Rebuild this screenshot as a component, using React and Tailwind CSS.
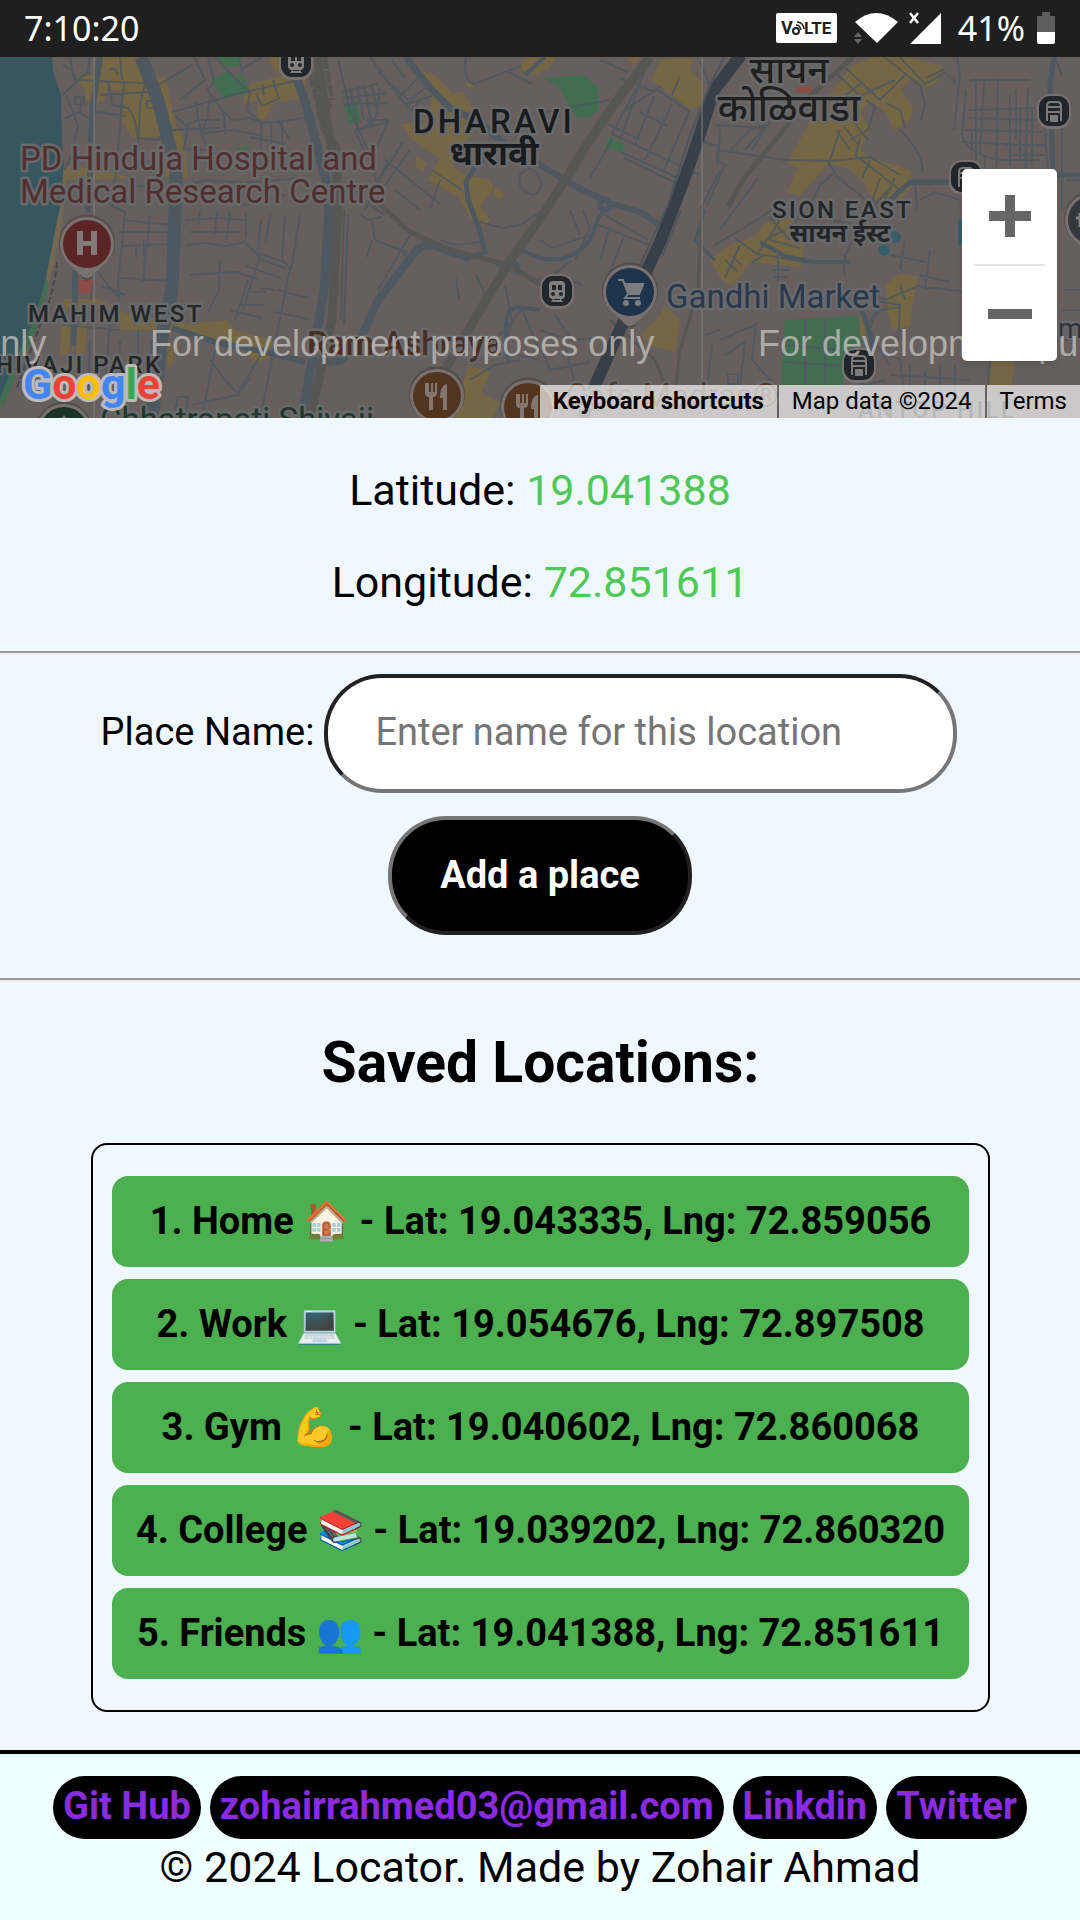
import React from "react";

const MAP_FONT = "Roboto, 'Noto Sans', 'Noto Sans Devanagari', sans-serif";

const locations = [
  { name: "Home 🏠", lat: "19.043335", lng: "72.859056" },
  { name: "Work 💻", lat: "19.054676", lng: "72.897508" },
  { name: "Gym 💪", lat: "19.040602", lng: "72.860068" },
  { name: "College 📚", lat: "19.039202", lng: "72.860320" },
  { name: "Friends 👥", lat: "19.041388", lng: "72.851611" },
];

const links = [
  { label: "Git Hub", href: "#github" },
  { label: "zohairrahmed03@gmail.com", href: "mailto:zohairrahmed03@gmail.com" },
  { label: "Linkdin", href: "#linkdin" },
  { label: "Twitter", href: "#twitter" },
];

const watermarks = [-458, 150, 758];

function StatusBar() {
  return (
    <header className="flex h-[57px] items-center justify-between bg-[#1f1f1f] pr-[25px] pb-px pl-6 font-['Noto_Sans',sans-serif] text-[34px] leading-none text-white">
      <span>7:10:20</span>
      <div className="flex items-center">
        <svg className="h-[30px] w-[61px]" viewBox="0 0 61 30" aria-label="VoLTE">
          <rect width="61" height="30" rx="2" fill="#fff" />
          <text x="5" y="21" fontFamily="Roboto, sans-serif" fontWeight="700" fontSize="18" fill="#1f1f1f">V</text>
          <text x="28" y="21" fontFamily="Roboto, sans-serif" fontWeight="700" fontSize="17" fill="#1f1f1f">LTE</text>
          <circle cx="20" cy="18" r="3" fill="none" stroke="#1f1f1f" strokeWidth="2" />
          <path d="M20 12q4 0 5 5M21 9q6 0 7 7" fill="none" stroke="#1f1f1f" strokeWidth="1.500" />
        </svg>
        <svg className="ml-4 h-8 w-[46px]" viewBox="0 0 46 32">
          <path d="M2 10Q23-8 45 10L24 31Z" fill="#fff" />
          <path d="M1 25l4-5 4 5ZM1 27l4 5 4-5Z" fill="#666" />
        </svg>
        <svg className="ml-2 h-8 w-[35px]" viewBox="0 0 35 32">
          <path d="M3 32L34 1V32Z" fill="#fff" />
          <path d="M3 1l8 10M11 1L3 11" stroke="#fff" strokeWidth="2.500" />
        </svg>
        <span className="ml-4">41%</span>
        <svg className="ml-3 h-8 w-[18px]" viewBox="0 0 18 32">
          <path d="M0 5q0-1 1-1H5V0h8V4h4q1 0 1 1V20H0Z" fill="#5e5e5e" />
          <path d="M0 20H18V30q0 2-2 2H2q-2 0-2-2Z" fill="#fff" />
        </svg>
      </div>
    </header>
  );
}

function Pin({ x, y, fill, children }) {
  return (
    <g transform={`translate(${x} ${y})`}>
      <path d="M0 37Q-5 36-8 28L-18 20A28 28 0 1 1 18 20L8 28Q5 36 0 37Z" fill="#3f3b3b" opacity=".5" />
      <path d="M0 34Q-4 34-8 29L-18 20A27 27 0 1 1 18 20L8 29Q4 34 0 34Z" fill="#787170" />
      <circle r="24" fill={fill} />
      {children}
    </g>
  );
}

function Fork() {
  return (
    <path
      d="M-12-13v10q0 4 4 4V14h4V1q4 0 4-4V-13h-2v9h-2v-9h-2v9h-2v-9ZM9-12q-6 2-6 14h3V14h4V-12Z"
      fill="#82766f"
    />
  );
}

function Transit({ x, y, bus }) {
  return (
    <g transform={`translate(${x} ${y})`}>
      <rect x="-17" y="-17" width="34" height="35" rx="13" fill="#777170" />
      <rect x="-15" y="-15" width="30" height="30" rx="11" fill="#22262b" />
      {bus ? (
        <g fill="none" stroke="#7d7a7a" strokeWidth="2">
          <path d="M-7 10V-5q0-4 4-4H3q4 0 4 4V10" />
          <path d="M-7-4H7M-7 1H7" />
          <rect x="-3" y="5" width="6" height="5" fill="#7d7a7a" />
        </g>
      ) : (
        <g>
          <path d="M-8-6q0-4 4-4H4q4 0 4 4V4q0 4-4 4L6 11H-6L-4 8q-4 0-4-4Z" fill="#82807f" />
          <path d="M-5-6h4v5h-4ZM1-6h4v5H1ZM-3 9H3V8H-3Z" fill="#22262b" />
          <circle cx="-4" cy="3" r="2" fill="#22262b" />
          <circle cx="4" cy="3" r="2" fill="#22262b" />
        </g>
      )}
    </g>
  );
}

function MapLabel({ children, className = "", ...props }) {
  return (
    <text
      fontFamily={MAP_FONT}
      stroke="#68696a"
      strokeWidth="5"
      strokeLinejoin="round"
      paintOrder="stroke"
      className={className}
      {...props}
    >
      {children}
    </text>
  );
}

function MapDrawing() {
  return (
    <svg className="block h-full w-full" viewBox="0 57 1080 361" preserveAspectRatio="xMidYMid slice" role="img" aria-label="Map of Dharavi, Mumbai">
      <rect y="57" width="1080" height="361" fill="#665f5e" />

      <g fill="#766744">
        <path d="M100 57H148L141 75 152 78 165 77 171 103 176 125 184 140 188 178 160 176 162 136 132 138 122 120 124 93 108 89 103 102 86 100 84 88 76 78 92 75Z" />
        <path d="M268 57H284L290 73 276 72ZM250 84L280 76 306 70 306 98 275 102 265 119 257 119 259 99 243 105 244 95Z" />
        <path d="M64 165L110 172 130 178 60 180ZM63 299L100 299 125 313 192 324 226 320 235 330 272 340 270 358 256 362 240 348 190 336 168 330 122 330 94 308 63 308Z" />
        <path d="M61 323H72L68 355H60ZM78 325H87L84 355H76ZM169 344H177L171 367H167Z" />
        <path d="M416 57L424 72 436 76 452 93 463 92 472 108 464 114 480 124 470 138 460 146 452 165 462 174 490 180 494 188 480 207 490 220 484 226 470 218 458 196 428 180 440 158 410 138 402 124 425 121 432 100Z" />
        <path d="M417 156L427 163 422 171 415 166ZM495 187L505 194 500 200 493 195ZM466 82L474 86 469 90ZM525 57H540V77L520 70Z" />
        <path d="M540 57H557L547 70H540ZM626 57H640L635 66Z" />
        <path d="M660 60L693 57 690 70 704 84 700 106 690 109 652 80Z" />
        <path d="M851 66L874 57H908L943 66 937 82 926 87 912 78 900 90 913 108 909 122 894 130 886 112 871 101 860 112 870 130 860 150 871 158 910 170 912 186 892 210 870 196 866 184 848 168 828 164 800 195 787 192 798 168 787 163 810 122 830 114 829 94 842 80Z" />
        <path d="M781 220L795 216 790 233 804 244 801 267 770 264 751 262 732 286 722 280 710 260 728 246 756 236 765 222Z" />
        <path d="M886 284L900 274 918 276 913 300 910 326 893 330 888 312ZM860 315L868 330 860 342Z" />
        <path d="M665 306L680 320 675 352 652 346 641 334 658 318ZM991 361H1014L1012 385H988Z" />
        <path d="M468 365L490 372 481 394 500 402 492 418H456L460 395Z" />
      </g>

      <g fill="#416e50">
        <path d="M217 57H241L239 65 228 67 220 63ZM211 80L229 71 234 78 241 75 251 92 224 99ZM344 105L356 102 361 121 349 124ZM234 149L251 145 244 152Z" />
        <path d="M543 78L585 75 598 88 599 110 588 118 576 117 566 100 559 87ZM609 137L624 144 622 152 605 147Z" />
        <path d="M785 320L857 316 862 343 850 363 841 387H781Z" />
        <path d="M46 278L49 283 38 325 15 378 2 410 0 398 20 350 35 318ZM53 393H62V401H53Z" />
      </g>

      <path d="M0 57H52L53 72 61 95 62 140 64 165 60 207 46 278 36 315 20 350 0 398Z" fill="#36575f" />
      <path d="M64 165L60 207 46 278 49 284 60 235 66 190Z" fill="#756952" />
      <path d="M57 262Q54 290 46 310T16 390" fill="none" stroke="#45474a" strokeWidth="2" strokeDasharray="6 3" />
      <path d="M78 280H93L91 293H79ZM794 92Q805 79 816 92Z" fill="#8c4c45" />
      <g fill="#345f69">
        <circle cx="884" cy="250" r="6" /><circle cx="895" cy="237" r="6" /><path d="M958 220h6v25h-6Z" />
      </g>

      <g fill="none" stroke="#4e5860" strokeWidth="2" opacity=".85">
        <path d="M63 65L72 70 76 80 98 81 160 84 192 65M70 57L74 80M120 57L122 80M110 70Q115 65 118 75M108 82L112 105 128 108 134 118 138 138 158 140 172 125M124 83L122 100 118 150 112 205M145 84L140 105 138 150M82 96L80 112 65 118M96 112L126 116M75 97h9v7h-9ZM147 101h7v7h-7ZM100 95L150 92" />
        <path d="M172 112L240 93 300 80M180 100L205 80 194 57M208 57L214 82 207 90 222 110 232 120 250 118 262 123 285 121 310 117M215 57L250 94 246 110 262 122M240 70L262 57M238 57L243 73M175 116L186 125 198 120 220 120M188 124L184 150M196 101L198 120 205 143 220 160M210 98L207 118 203 130M223 110L226 134M200 134L230 130 260 135M262 123L260 155M271 122V155M282 121V145M250 137L285 144M210 142L208 165M170 130L220 128M278 120L290 140M256 94L262 106 280 98M273 80L278 97M262 84L264 95M182 148L205 150" />
        <path d="M342 92L378 84M343 98L386 93M344 104L388 103M350 88L358 130M357 86L364 120M364 85L372 125M371 84L378 115M380 88L376 117 361 130M355 130L388 122 376 148M366 120H388M355 130L366 155" />
        <path d="M370 57L400 98 422 122M378 72L408 100M392 60L405 78M400 96L420 76 406 57M410 100L425 88M406 104L432 96M412 110L422 98M466 57Q462 82 475 84L505 72 522 66M508 72L532 84M385 160L440 204M403 142L380 178M432 170L462 190M410 150L385 185M386 165L365 210M440 180L430 208M395 190L420 210M370 205L385 215M520 175q10-12 18 0t-4 20q-18-4-14-20Z" />
        <path d="M90 57L88 72 62 95M66 95L78 125 72 155 64 170M80 112L90 120M120 155L180 168M130 185L175 190 205 180 245 183 300 178M205 190L245 205 285 195M110 205L125 212 122 246 118 280M122 246L170 244M150 215L143 282M122 220L170 225M136 246v12M144 240v16M119 232H170M185 220L218 218 245 220M186 245L205 243 225 246 245 242 262 260 285 268M190 232H240M200 210L198 225M218 210L214 235M230 212L226 240M246 213V238M261 220L258 250M270 214L266 242M190 275L236 272 258 279M120 278L172 281M96 270L120 300M102 286L125 295M118 280L119 300M220 260L219 290 208 312M260 257L243 310M290 268L260 420M285 215L282 260 292 270M300 215L291 270M248 280L235 320M230 310L262 318M255 252L284 262M246 266L281 278M262 288L275 290M250 292H266M240 305H265M278 290L308 298M275 312L308 319M266 345L237 395 192 405M237 395L250 378M215 350L202 417M210 360L232 388 240 395M174 417L178 397H188L186 417M110 320L103 415M120 340L118 395M138 330V380M152 340L146 410M90 340L88 390M94 280L90 300M62 325L120 330" />
        <path d="M338 60L350 110 372 160 380 205M360 214L367 220 382 217M372 220L375 240 408 253M372 240L367 257M410 235L378 290M417 232L424 242M403 254L412 258 382 300M456 278Q458 290 459 300M505 286L512 320 505 350M520 305L535 340 540 352M490 260L505 270 540 280M480 222L502 228 520 225 540 212M476 275L488 300M470 380L495 365 520 360M523 308L505 330 482 348M506 352L540 360M440 240L455 245 480 242" />
        <path d="M622 112L662 86M620 78L655 92M644 72L620 140M628 72L600 60M655 88L690 112M640 82L612 134 700 175M612 140L590 178M608 124L640 140M640 112L668 126M654 96L635 145M672 104L645 160M689 112L664 170M621 152L683 180M624 158L680 185M700 62L716 100M680 76L672 95M545 112L610 100" />
        <path d="M540 240L552 248 590 235M583 210L590 228 575 260M598 225L650 245M610 226L600 260M624 236L610 272M570 210L580 235M572 260L540 285M560 275L582 285M600 212L648 240M540 330L570 340 595 338M555 315L570 338M542 350L550 370 590 362M565 345L575 385" />
        <path d="M716 125L766 128M704 142L718 146 717 160 725 165 707 205M718 150L785 160 832 161 870 157 900 175M745 150L782 108M730 151L750 130 766 125M720 125L718 165M720 170L700 210M758 178L720 230M745 180L728 210M764 130L752 150M835 72L860 96 895 80M860 84L842 98M846 68L880 100 905 75M884 57L920 85 925 105 921 120M900 57L925 84 943 74M866 100L875 107 868 130 850 140M886 103L900 110 905 128M836 130L850 150M844 126L858 145M852 120L868 140M830 160L840 130M860 138L856 154M828 162L835 172 820 185 810 205M835 175L860 195 875 210M855 155L900 190M870 160L862 178M880 178L870 208M895 178L882 205M900 130Q925 155 922 172M926 78L942 70 955 82M957 57L960 75 954 130M915 180L917 210M888 190L875 205M910 184L970 183M920 200L935 192 960 200" />
        <path d="M968 110L1035 108M968 118L1040 120M965 130L1043 132M962 142L1045 146M976 80V160M984 80L980 155M998 78L996 180M1010 95V165M1020 110V160M1032 110V165M970 80H1030M966 90L962 135Q968 155 1000 160H1040M1003 145L1045 145M1010 155H1045M1000 170H1042M985 155V170M972 132V150M1043 95L1048 175M1016 90V140M1028 88L1025 180M1062 110V210M1066 180H1080M1055 57L1062 75M955 85V80" />
        <path d="M715 245L760 218 772 210M735 238L757 254 805 262M757 254L768 238 785 230M770 240L800 248M778 255V282M773 270H790M774 277H788M785 210L768 240M800 212L790 235M725 260L738 272M732 256L742 266M740 245L725 278M765 255L752 262M770 218L790 240M845 275Q842 260 848 250 856 235 860 213M832 220L855 225M860 290L885 300 918 286 1000 296M872 300L900 305 898 345M900 285L905 300M880 290L870 330M755 325L720 340M756 322L752 360 770 380M725 355L745 342 740 385M728 374h10v10h-10ZM712 344L708 380M705 335L720 330M785 345L840 350M786 362L845 366M825 320V385M805 320V385M866 325L880 310 900 307M880 350L900 360 905 400M890 375L970 380M910 365V390M925 370V390M940 365V395M955 365V400M870 335L890 365M865 385L885 380M985 240L1000 300M920 275L950 282M930 250L925 290M890 255L925 262M905 240L900 270M1064 290H1080M1062 310H1080M1061 340H1080M990 360L988 385" />
      </g>

      <g fill="none" stroke="#4d5861">
        <path d="M100 57L93 105 91 140Q90 190 88 212M75 270V300L73 345" strokeWidth="6" />
        <path d="M141 57L158 100 168 140 176 172 175 210 172 290 163 330 152 418" strokeWidth="13" />
        <path d="M172 328L215 342 266 352 305 362" strokeWidth="6" />
        <path d="M296 75L306 105 318 150 326 180 329 210 324 290 312 360 302 418" strokeWidth="9" />
        <path d="M348 215L344 325" strokeWidth="2" />
        <path d="M316 364L342 360 360 340 378 300 415 252Q428 240 445 250L470 258" strokeWidth="8" />
        <path d="M470 258L485 252 478 225 468 200 466 182 476 165 500 150" strokeWidth="5" />
        <path d="M406 57L430 88 450 108 478 122 500 140 540 165" strokeWidth="7" />
        <path d="M525 75L545 57M509 362Q503 330 508 314 510 306 525 308L540 310M520 250L540 258M508 256L520 268" strokeWidth="4" />
        <path d="M540 165L575 186 610 203 640 212 660 225M604 200a5 5 0 1 0 2 0" strokeWidth="6" />
        <path d="M540 258Q570 265 590 240L600 214" strokeWidth="4" />
        <path d="M760 242L785 256 812 262 850 262" strokeWidth="4" />
        <path d="M1054 57L1050 85 1054 200M1050 175H1080M965 182H910L885 205M862 310L872 340 862 385" strokeWidth="5" />
        <path d="M705 210L695 240 715 260" strokeWidth="3" />
      </g>

      <g fill="none" stroke="#565655">
        <path d="M307 60L330 105 322 130M310 75L325 135M315 80L320 120M325 57L332 100" strokeWidth="4" strokeDasharray="12 2" />
        <path d="M318 57L324 100 330 140 337 175 338 210 332 320 310 418" strokeWidth="9" />
        <path d="M330 135L342 153" strokeWidth="4" />
        <path d="M650 57L620 96 588 143 545 212 512 258 480 310 446 368" strokeWidth="9" />
        <path d="M853 57L810 96 781 133 745 177 728 206M375 200L410 232 450 250 510 265 540 285" strokeWidth="5" />
        <path d="M702 205L698 290 680 350 676 385M610 320L655 360 665 385" strokeWidth="3" />
        <path d="M344 210L341 320" strokeWidth="2" />
      </g>
      <path d="M741 55L714 90 698 140 684 180 661 240 634 298 596 383 583 418" fill="none" stroke="#374049" strokeWidth="12" />
      <path d="M724 57L708 90 690 135 668 205 640 265M681 210L663 255" fill="none" stroke="#4b555e" strokeWidth="2" />

      <path d="M94 57V418M702 57V418" stroke="#85807f" strokeWidth="1" />

      <Transit x={296} y={62} />
      <Transit x={557} y={291} />
      <Transit x={1054} y={111} bus />
      <Transit x={966} y={177} bus />
      <Transit x={859} y={365} bus />

      <MapLabel x="413" y="133" fontSize="33" fontWeight="500" fill="#191b1d" className="tracking-widest">DHARAVI</MapLabel>
      <MapLabel x="494" y="165" fontSize="34" fontWeight="700" textAnchor="middle" fill="#191b1d">धारावी</MapLabel>
      <MapLabel x="789" y="83" fontSize="37" fontWeight="500" textAnchor="middle" fill="#202020">सायन</MapLabel>
      <MapLabel x="789" y="121" fontSize="38" fontWeight="500" textAnchor="middle" fill="#202020">कोळिवाडा</MapLabel>
      <MapLabel x="772" y="218" fontSize="24" fontWeight="500" fill="#232527" className="tracking-widest">SION EAST</MapLabel>
      <MapLabel x="840" y="242" fontSize="25" fontWeight="700" textAnchor="middle" fill="#232527">सायन ईस्ट</MapLabel>
      <MapLabel x="20" y="170" fontSize="33" fill="#512e2f">PD Hinduja Hospital and</MapLabel>
      <MapLabel x="20" y="203" fontSize="33" fill="#512e2f">Medical Research Centre</MapLabel>
      <MapLabel x="28" y="322" fontSize="24" fontWeight="500" fill="#242628" className="tracking-widest">MAHIM WEST</MapLabel>
      <MapLabel x="-21" y="373" fontSize="24" fontWeight="500" fill="#242628" className="tracking-widest">SHIVAJI PARK</MapLabel>
      <MapLabel x="666" y="308" fontSize="33" fill="#28394f">Gandhi Market</MapLabel>
      <MapLabel x="307" y="355" fontSize="33" fontWeight="500" fill="#492f25">Ram Ashraya</MapLabel>
      <MapLabel x="100" y="431" fontSize="33" fill="#21372d">Chhatrapati Shivaji</MapLabel>
      <MapLabel x="566" y="407" fontSize="33" fill="#51362a">Cafe Madras®</MapLabel>
      <MapLabel x="858" y="418" fontSize="24" fontWeight="500" fill="#242628" className="tracking-widest">ANTOP HILL</MapLabel>
      <MapLabel x="1058" y="338" fontSize="28" fill="#30343a">m</MapLabel>

      <Pin x={87} y={244} fill="#5b2528">
        <path d="M-10-13h6V-3H4V-13h6V11H4V2H-4v9h-6Z" fill="#837b7a" />
      </Pin>
      <Pin x={630} y={292} fill="#1d344a">
        <path d="M-12-12h5L-2 2H9L13-7M-6-8H13L9 2H-2L-5 6H10" fill="none" stroke="#7b7d80" strokeWidth="2" />
        <path d="M-6-8H13L9 2H-2Z" fill="#7b7d80" />
        <circle cx="-4" cy="11" r="3" fill="#7b7d80" />
        <circle cx="8" cy="11" r="3" fill="#7b7d80" />
      </Pin>
      <Pin x={437} y={396} fill="#523520"><Fork /></Pin>
      <Pin x={528} y={407} fill="#523520"><Fork /></Pin>
      <Pin x={64} y={431} fill="#193326"><path d="M0-16L9-4H-9Z" fill="#77706f" /></Pin>
      <Pin x={1092} y={220} fill="#34373b"><path d="M-16-2h8M-12-7v14" stroke="#82807f" strokeWidth="3" /></Pin>

      {watermarks.map((x) => (
        <text key={x} x={x} y="356" fontFamily="'Liberation Sans', Arial, sans-serif" fontSize="36" fill="#c4c1bf" fillOpacity=".78">
          For development purposes only
        </text>
      ))}
    </svg>
  );
}

function GoogleLogo() {
  return (
    <svg className="absolute bottom-1 left-5 h-[58px] w-[148px]" viewBox="20 356 148 58" aria-label="Google">
      <text x="23" y="399" fontFamily="Roboto, sans-serif" fontSize="43" fontWeight="700" stroke="#bdbbba" strokeWidth="6" strokeLinejoin="round" paintOrder="stroke">
        <tspan fill="#4285f4">G</tspan>
        <tspan fill="#ea4335">o</tspan>
        <tspan fill="#fbbc05">o</tspan>
        <tspan fill="#4285f4">g</tspan>
        <tspan fill="#34a853">l</tspan>
        <tspan fill="#ea4335">e</tspan>
      </text>
    </svg>
  );
}

function MapView() {
  return (
    <section className="relative h-[361px] overflow-hidden">
      <MapDrawing />
      <GoogleLogo />
      <div className="absolute top-28 right-[23px] flex w-[95px] flex-col items-center rounded-[5px] bg-white shadow-md">
        <button type="button" aria-label="Zoom in" className="flex h-[95px] w-full items-center justify-center">
          <svg className="h-11 w-11" viewBox="0 0 44 44"><path d="M17 0H27V16H43V26H27V42H17V26H1V16H17Z" fill="#666" /></svg>
        </button>
        <div className="h-0.5 w-[71px] bg-[#e6e6e6]" />
        <button type="button" aria-label="Zoom out" className="flex h-[95px] w-full items-center justify-center">
          <svg className="h-11 w-11" viewBox="0 0 44 44"><path d="M0 17H44V27H0Z" fill="#666" /></svg>
        </button>
      </div>
      <div className="absolute right-0 bottom-0 flex h-[33px] gap-[2px] text-[24px] leading-[33px] text-black">
        <button type="button" className="bg-[#f5f5f5]/70 px-[13px] font-bold">Keyboard shortcuts</button>
        <span className="bg-[#f5f5f5]/70 px-[13px]">Map data ©2024</span>
        <a href="#terms" className="bg-[#f5f5f5]/70 px-[13px]">Terms</a>
      </div>
    </section>
  );
}

function Divider() {
  return <hr className="h-1 border-t-2 border-b-2 border-t-[#9a9a9a] border-b-[#ededed]" />;
}

export default function App() {
  return (
    <div className="flex min-h-screen flex-col bg-[#f0f8ff] font-[Roboto,sans-serif] text-black">
      <StatusBar />
      <MapView />
      <main>
        <section className="flex flex-col gap-[42px] pt-[47px] pb-11 text-center text-[43px] leading-[50px]">
          <p>Latitude: <span className="text-[#50c858]">19.041388</span></p>
          <p>Longitude: <span className="text-[#50c858]">72.851611</span></p>
        </section>
        <Divider />
        <form className="flex flex-col items-center gap-[23px] pt-[19px] pb-[43px] text-[38px]" onSubmit={(e) => e.preventDefault()}>
          <div className="flex items-center gap-[10px] pr-[22px]">
            <label htmlFor="place" className="pb-0.5">Place Name:</label>
            <input
              id="place"
              type="text"
              placeholder="Enter name for this location"
              className="h-[119px] w-[633px] rounded-[58px] border-4 border-[#767676] bg-white px-[47px] pb-1 [border-style:inset] placeholder:text-[#757575]"
            />
          </div>
          <button type="submit" className="h-[119px] rounded-[58px] border-4 border-[#767676] bg-black px-12 font-bold text-white [border-style:outset]">
            Add a place
          </button>
        </form>
        <Divider />
        <section className="pt-[47px] pr-[90px] pb-[38px] pl-[91px]">
          <h1 className="text-center text-[57px] leading-[68px] font-bold">Saved Locations:</h1>
          <ol className="mt-[46px] flex flex-col gap-3 rounded-2xl border-2 border-black px-[19px] py-[31px]">
            {locations.map((place, i) => (
              <li key={place.lat} className="rounded-2xl bg-[#4caf50] pb-px text-center text-[38px] leading-[90px] font-bold">
                {i + 1}. {place.name} - Lat: {place.lat}, Lng: {place.lng}
              </li>
            ))}
          </ol>
        </section>
      </main>
      <footer className="flex grow flex-col items-center border-t-4 border-black bg-[#f0ffff] pt-[22px]">
        <nav className="flex justify-center gap-[9px] text-[38px] leading-[61px] font-bold">
          {links.map((link) => (
            <a key={link.label} href={link.href} className="rounded-full bg-black px-[10px] pb-0.5 text-[#8a2be2]">
              {link.label}
            </a>
          ))}
        </nav>
        <p className="mt-1 text-[43px] leading-[48px]">© 2024 Locator. Made by Zohair Ahmad</p>
      </footer>
    </div>
  );
}
